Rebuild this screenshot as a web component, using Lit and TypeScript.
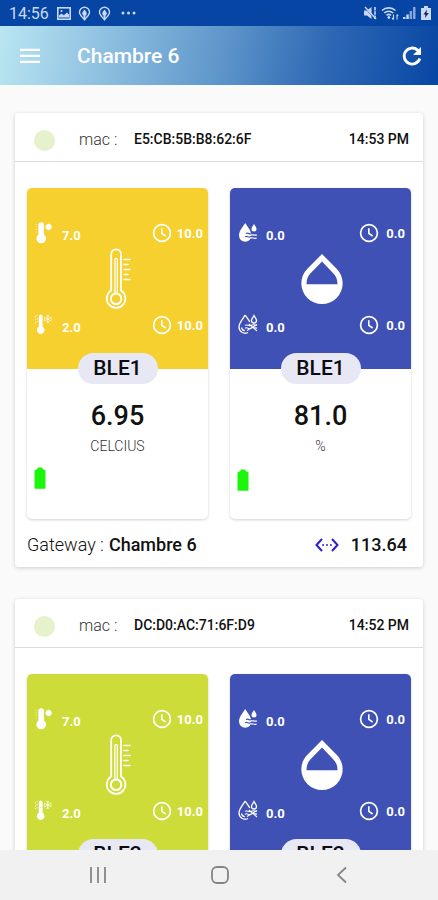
import { LitElement, html, svg, css } from "lit";
import { customElement, property } from "lit/decorators.js";
import { classMap } from "lit/directives/class-map.js";

interface Reading {
  kind: "temperature" | "humidity";
  tone: "amber" | "lime" | "indigo";
  sensor: string;
  value: string;
  unit: string;
  high: string;
  highTime: string;
  low: string;
  lowTime: string;
}

interface Device {
  mac: string;
  time: string;
  gateway: string;
  signal: string;
  readings: Reading[];
}

const humidity = (sensor: string): Reading => ({
  kind: "humidity", tone: "indigo", sensor, value: "81.0", unit: "%",
  high: "0.0", highTime: "0.0", low: "0.0", lowTime: "0.0",
});

const temperature = (sensor: string, tone: "amber" | "lime"): Reading => ({
  kind: "temperature", tone, sensor, value: "6.95", unit: "CELCIUS",
  high: "7.0", highTime: "10.0", low: "2.0", lowTime: "10.0",
});

const devices: Device[] = [
  {
    mac: "E5:CB:5B:B8:62:6F", time: "14:53 PM", gateway: "Chambre 6", signal: "113.64",
    readings: [temperature("BLE1", "amber"), humidity("BLE1")],
  },
  {
    mac: "DC:D0:AC:71:6F:D9", time: "14:52 PM", gateway: "Chambre 6", signal: "113.64",
    readings: [temperature("BLE2", "lime"), humidity("BLE2")],
  },
];

const clockIcon = html`<svg width="20" height="20" viewBox="0 0 20 20" fill="none" stroke="currentColor" aria-hidden="true">
  <circle cx="10" cy="10" r="8.4" stroke-width="1.7"/>
  <path d="M9.8 5.2v5.2l3.8 2.6" stroke-width="1.6"/>
</svg>`;

const thermoHot = html`<svg width="20" height="24" viewBox="0 0 20 24" fill="currentColor" aria-hidden="true">
  <path d="M4.4 4a2.8 2.8 0 0 1 5.600 0v9.600a4.800 4.800 0 1 1-5.600 0z"/>
  <circle cx="14.600" cy="6" r="3"/>
  <path d="M14.600 2.500v7M11.100 6h7" stroke="currentColor" stroke-width=".6"/>
  <path d="M2.200 3v9" stroke="currentColor" stroke-width="1" stroke-dasharray="1 1.500" opacity=".7"/>
</svg>`;

const thermoCold = html`<svg width="20" height="24" viewBox="0 0 20 24" fill="currentColor" aria-hidden="true">
  <path d="M4.800 3.400a1.900 1.900 0 0 1 3.800 0v10.400a3.800 3.800 0 1 1-3.800 0z"/>
  <path d="M13.800 1.800v8.400M10.200 3.900l7.200 4.200M17.400 3.900l-7.200 4.200M12.400 2.400l1.400 1.200 1.400-1.200M12.400 9.600l1.400-1.200 1.400 1.200M10.400 5.200v1.600M17.200 5.200v1.600" fill="none" stroke="currentColor" stroke-width=".9" opacity=".85"/>
  <path d="M1.500 3v9M3 2v9" stroke="currentColor" stroke-width=".8" stroke-dasharray="1.500 1.500" opacity=".8"/>
</svg>`;

const dropShapes = svg`
  <path d="M8.200 2C6.200 5.600 2 9.600 2 14.500a6.200 6.200 0 0 0 12.400 0C14.400 9.600 10.200 5.600 8.200 2z"/>
  <path d="M17 3c-.9 1.700-2.500 3.200-2.500 5a2.500 2.500 0 0 0 5 0c0-1.800-1.600-3.300-2.500-5z"/>`;

const dropHigh = html`<svg width="22" height="24" viewBox="0 0 22 24" aria-hidden="true">
  <g fill="currentColor">${dropShapes}</g>
  <path d="M9 12.600c2-1.500 3.600 1.300 5.600 0s3.400-.4 5.400 0M8 15.800c2-1.500 3.600 1.300 5.600 0s3.400-.4 5.400 0" fill="none" stroke="#3f51b5" stroke-width="1.300"/>
  <path d="M13.600 14c1.600-1 3 .8 6.400 0M13.600 17.100c1.600-1 3 .8 6 0" fill="none" stroke="currentColor" stroke-width="1.200"/>
</svg>`;

const dropLow = html`<svg width="22" height="24" viewBox="0 0 22 24" fill="none" stroke="currentColor" aria-hidden="true">
  <g stroke-width="1.300">${svg`
    <path d="M8.200 2C6.200 5.600 2 9.600 2 14a6.200 6.200 0 0 0 9 5.500M8.200 2c1 1.900 3.200 4.500 4.600 7"/>
    <path d="M17 2.500c-.9 1.700-2.500 3.200-2.500 5a2.500 2.500 0 0 0 5 0c0-1.800-1.600-3.300-2.500-5z"/>
    <path d="M4.600 14.500a3.600 3.600 0 0 0 3.200 3.200"/>`}</g>
  <path d="M8 12.400c2-1.500 4 1.300 6 0s4-.6 6 0M8 15.200c2-1.500 4 1.300 6 0s4-.6 6 0M10 17.500l10-6M12 11l8 7" stroke-width="1.100"/>
</svg>`;

const thermometerIcon = html`<svg width="26" height="62" viewBox="0 0 26 62" fill="none" stroke="currentColor" aria-hidden="true">
  <path d="M5.200 42.600V6.200a4.900 4.900 0 0 1 9.800 0v36.400a9.300 9.300 0 1 1-9.800 0z" stroke-width="1.800"/>
  <path d="M8.900 45V11.600a1.200 1.200 0 0 1 2.400 0V45" stroke-width="1.300"/>
  <circle cx="10.100" cy="50.700" r="5.300" stroke-width="2"/>
  <path d="M18 11.500h6M18 16.500h4M18 21.500h6M18 26.500h4M18 31.500h6" stroke-width="1.600" stroke-linecap="round"/>
</svg>`;

const dropletIcon = html`<svg width="62" height="62" viewBox="0 0 24 24" fill="currentColor" aria-hidden="true">
  <path d="M17.660 8L12 2.350 6.340 8C4.780 9.560 4 11.640 4 13.640s.78 4.110 2.340 5.670 3.610 2.350 5.660 2.350 4.100-.79 5.660-2.350S20 15.640 20 13.640 19.220 9.560 17.660 8zM6 14c.01-2 .62-3.270 1.760-4.400L12 5.270l4.240 4.380C17.380 10.770 17.990 12 18 14H6z"/>
</svg>`;

@customElement("status-bar")
export class StatusBar extends LitElement {
  static styles = css`
    :host { display: flex; align-items: center; height: 26px; padding: 0 6px 0 9px; background: #0645a3; color: #c9d9f5; }
    .time { font-size: 16px; line-height: 26px; padding-top: 2px; }
    .group { display: flex; align-items: center; gap: 7px; margin-left: 8px; }
    .right { gap: 4px; margin-left: auto; }
    svg { display: block; }
  `;
  render() {
    const pin = html`<svg width="13" height="15" viewBox="0 0 13 15" aria-hidden="true">
      <path d="M6.500 1.200a5 5 0 0 1 5 5c0 2.600-2.600 4.600-5 7.600-2.400-3-5-5-5-7.600a5 5 0 0 1 5-5z" fill="none" stroke="currentColor" stroke-width="1.400"/>
      <path d="M6.500 3.400c1 1.400 2.300 2.500 2.300 4.200a2.300 2.300 0 0 1-4.600 0c0-1.700 1.300-2.800 2.300-4.200zM5.500 9h2v4h-2z" fill="currentColor"/>
    </svg>`;
    return html`
      <span class="time">14:56</span>
      <div class="group">
        <svg width="14" height="13" viewBox="0 0 14 13" aria-hidden="true">
          <rect x=".8" y=".8" width="12.400" height="11.400" fill="none" stroke="currentColor" stroke-width="1.600"/>
          <path d="M2 10.500V8.500l2.500-2 2.300 1.800L10 5.500l2 2v3z" fill="currentColor"/><circle cx="4.500" cy="4" r="1.100" fill="currentColor"/>
        </svg>
        ${pin}${pin}
        <svg width="18" height="4" viewBox="0 0 18 4" fill="currentColor" aria-hidden="true">
          <circle cx="5" cy="2" r="1.500"/><circle cx="10.500" cy="2" r="1.500"/><circle cx="16" cy="2" r="1.500"/>
        </svg>
      </div>
      <div class="group right">
        <svg width="14" height="14" viewBox="0 0 14 14" aria-hidden="true">
          <path d="M1 4.500h3L8.500 1v12L4 9.500H1z" fill="currentColor"/>
          <path d="M1 1l11 12" stroke="#0645a3" stroke-width="1"/><path d="M2 1l11 12" stroke="currentColor" stroke-width="1.400"/>
          <path d="M12 1v12" stroke="currentColor" stroke-width="1.600" stroke-dasharray="3.500 .8"/>
        </svg>
        <svg width="18" height="14" viewBox="0 0 18 14" fill="none" stroke="currentColor" aria-hidden="true">
          <path d="M1 4.500a10 10 0 0 1 13.500 0M3.200 7a6.600 6.600 0 0 1 9 0M5.500 9.300a3.400 3.400 0 0 1 4.500 0" stroke-width="1.600"/>
          <circle cx="7.800" cy="11.500" r="1" fill="currentColor"/><path d="M12.500 8.500v5M11 12l1.500 1.500M16 8.500v5M16 8.500l1.200 1.500" stroke-width="1.100"/>
        </svg>
        <svg width="13" height="14" viewBox="0 0 13 14" fill="currentColor" aria-hidden="true">
          <path d="M0 11h2.500v2H0zM3.300 8.500h2.500V13H3.300z"/><path d="M6.600 5h2.500v8H6.600zM10 1h2.500v12H10z" opacity=".65"/>
        </svg>
        <svg width="12" height="14" viewBox="0 0 12 14" aria-hidden="true">
          <path d="M4 0h4v2h3v12H1V2h3z" fill="currentColor"/><path d="M7 3.500L3.500 8.500h2L5 12l3.800-5H6.500z" fill="#12294f"/>
        </svg>
      </div>`;
  }
}

@customElement("reading-tile")
export class ReadingTile extends LitElement {
  @property({ attribute: false }) reading!: Reading;

  static styles = css`
    :host { display: flex; flex-direction: column; border-radius: 5px; background: #fff; box-shadow: 0 1px 3px rgba(0, 0, 0, .18); }
    svg { display: block; flex: none; }
    .face { position: relative; padding: 33px 5px 32px 7px; border-radius: 5px 5px 0 0; color: #fff; }
    .amber { background: #f6d02f; }
    .lime { background: #cddc39; }
    .indigo { background: #3f51b5; }
    .row { display: flex; justify-content: space-between; height: 24px; }
    .stat { display: flex; align-items: center; gap: 8px; font-size: 13px; line-height: 24px; font-weight: 700; }
    .level span { padding-top: 5px; }
    .clock span { padding-top: 1px; }
    .clock { gap: 5px; }
    .indigo .level { gap: 7px; }
    .indigo .clock { gap: 7px; padding-right: 1px; }
    .hero { display: flex; align-items: center; justify-content: center; height: 68px; }
    .pill { position: absolute; left: 50%; bottom: -15px; transform: translateX(-50%); width: 80px; border-radius: 16px; background: #e8e8f4; color: #0b0b12; font-size: 21px; line-height: 31px; font-weight: 500; text-align: center; }
    .body { display: flex; flex-direction: column; align-items: center; padding: 30px 7px 28px; }
    .value { font-size: 27px; line-height: 35px; font-weight: 500; color: #111; }
    .unit { font-size: 14px; line-height: 24px; font-weight: 300; color: #333; }
    .battery { align-self: flex-start; margin-top: 9px; }
    .humidity .battery { margin-top: 11px; }
  `;

  render() {
    const r = this.reading;
    const hot = r.kind === "temperature";
    return html`
      <div class=${classMap({ face: true, [r.tone]: true })}>
        <div class="row">
          <div class="stat level">${hot ? thermoHot : dropHigh}<span>${r.high}</span></div>
          <div class="stat clock">${clockIcon}<span>${r.highTime}</span></div>
        </div>
        <div class="hero">${hot ? thermometerIcon : dropletIcon}</div>
        <div class="row">
          <div class="stat level">${hot ? thermoCold : dropLow}<span>${r.low}</span></div>
          <div class="stat clock">${clockIcon}<span>${r.lowTime}</span></div>
        </div>
        <div class="pill">${r.sensor}</div>
      </div>
      <div class=${classMap({ body: true, [r.kind]: true })}>
        <div class="value">${r.value}</div>
        <div class="unit">${r.unit}</div>
        <svg class="battery" width="12" height="22" viewBox="0 0 12 22" role="img" aria-label="Battery full">
          <path d="M3.500 2V.5h5V2l2.500 1c.5.200.5.500.5 1v17c0 .5-.2.800-.8.800H1.300c-.6 0-.8-.3-.8-.8V4c0-.5 0-.8.500-1z" fill="#1cf50c"/>
        </svg>
      </div>`;
  }
}

@customElement("device-card")
export class DeviceCard extends LitElement {
  @property({ attribute: false }) device!: Device;

  static styles = css`
    :host { display: block; background: #fff; border-radius: 4px; box-shadow: 0 1px 4px rgba(0, 0, 0, .18); color: #111; }
    .head { display: flex; align-items: center; height: 49px; padding: 4px 14px 0 19px; box-sizing: border-box; border-bottom: 1px solid #dcdce8; font-size: 14px; font-weight: 500; }
    .dot { width: 21px; height: 21px; margin-top: 2px; border-radius: 50%; background: #e5f2cc; }
    .label { margin-left: 24px; width: 55px; font-size: 16px; font-weight: 300; color: #333; }
    .time { margin-left: auto; }
    .tiles { display: grid; grid-template-columns: 1fr 1fr; gap: 22px; padding: 26px 12px 0; }
    .foot { display: flex; align-items: center; height: 48px; padding: 3px 16px 0 12px; box-sizing: border-box; font-size: 18px; line-height: 24px; font-weight: 500; }
    .foot .name { font-weight: 300; margin-right: 5px; }
    .foot svg { margin: 0 12px 0 auto; }
  `;

  render() {
    const d = this.device;
    return html`
      <div class="head">
        <span class="dot"></span><span class="label">mac :</span><span>${d.mac}</span><span class="time">${d.time}</span>
      </div>
      <div class="tiles">${d.readings.map((r) => html`<reading-tile .reading=${r}></reading-tile>`)}</div>
      <div class="foot">
        <span class="name">Gateway :</span><span>${d.gateway}</span>
        <svg width="24" height="16" viewBox="0 0 24 16" fill="none" stroke="#2a1fd0" aria-hidden="true">
          <path d="M7 2L1.500 8 7 14M17 2l5.500 6L17 14" stroke-width="2"/>
          <path d="M7.200 8h9.600" stroke-width="1.800" stroke-dasharray="1.800 2.100" opacity=".8"/>
        </svg>
        <span>${d.signal}</span>
      </div>`;
  }
}

@customElement("app-root")
export class AppRoot extends LitElement {
  static styles = css`
    :host { display: flex; flex-direction: column; height: 100vh; background: #fafafa; font-family: Roboto, "Liberation Sans", sans-serif; }
    status-bar, .bar, .nav { flex: none; }
    button { display: flex; align-items: center; justify-content: center; padding: 0; border: 0; background: none; color: inherit; cursor: pointer; }
    svg { display: block; }
    .bar { display: flex; align-items: center; height: 59px; padding: 0 13px 0 14px; color: #fff; background: linear-gradient(100deg, #bae6f2 0%, #92c3e2 22%, #5f97cb 50%, #2e68b4 74%, #0846a4 100%); }
    .bar button { height: 40px; }
    .menu { width: 32px; }
    .refresh { width: 26px; margin-left: auto; }
    .title { margin: 0 0 0 31px; font-size: 21px; line-height: 28px; font-weight: 500; }
    .list { flex: 1; min-height: 0; display: flex; flex-direction: column; gap: 32px; padding: 28px 15px; overflow-y: auto; scrollbar-width: none; }
    device-card { flex: none; }
    .nav { display: flex; justify-content: center; height: 50px; padding-left: 2px; background: #f1f1f1; color: #858585; }
    .nav button { width: 28%; height: 50px; }
  `;

  render() {
    return html`
      <status-bar></status-bar>
      <header class="bar">
        <button class="menu" aria-label="Menu">
          <svg width="22" height="16" viewBox="0 0 22 16" fill="currentColor"><path d="M1 .8h20v2.300H1zM1 6.800h20v2.300H1zM1 12.800h20v2.300H1z"/></svg>
        </button>
        <span class="title">Chambre 6</span>
        <button class="refresh" aria-label="Refresh">
          <svg width="26" height="26" viewBox="0 0 26 26">
            <path d="M20.800 15.500a8 8 0 1 1-2.200-8.400l2 2" fill="none" stroke="currentColor" stroke-width="2.800"/>
            <path d="M22 4v8h-8z" fill="currentColor"/>
          </svg>
        </button>
      </header>
      <main class="list">${devices.map((d) => html`<device-card .device=${d}></device-card>`)}</main>
      <nav class="nav">
        <button aria-label="Recent apps">
          <svg width="18" height="18" viewBox="0 0 18 18" stroke="currentColor" stroke-width="1.800"><path d="M2 1v16M9 1v16M16 1v16"/></svg>
        </button>
        <button aria-label="Home">
          <svg width="20" height="20" viewBox="0 0 20 20" fill="none" stroke="currentColor" stroke-width="1.800"><rect x="2" y="2" width="16" height="16" rx="5"/></svg>
        </button>
        <button aria-label="Back">
          <svg width="12" height="18" viewBox="0 0 12 18" fill="none" stroke="currentColor" stroke-width="1.800"><path d="M10 1.500L2 9l8 7.500"/></svg>
        </button>
      </nav>`;
  }
}
